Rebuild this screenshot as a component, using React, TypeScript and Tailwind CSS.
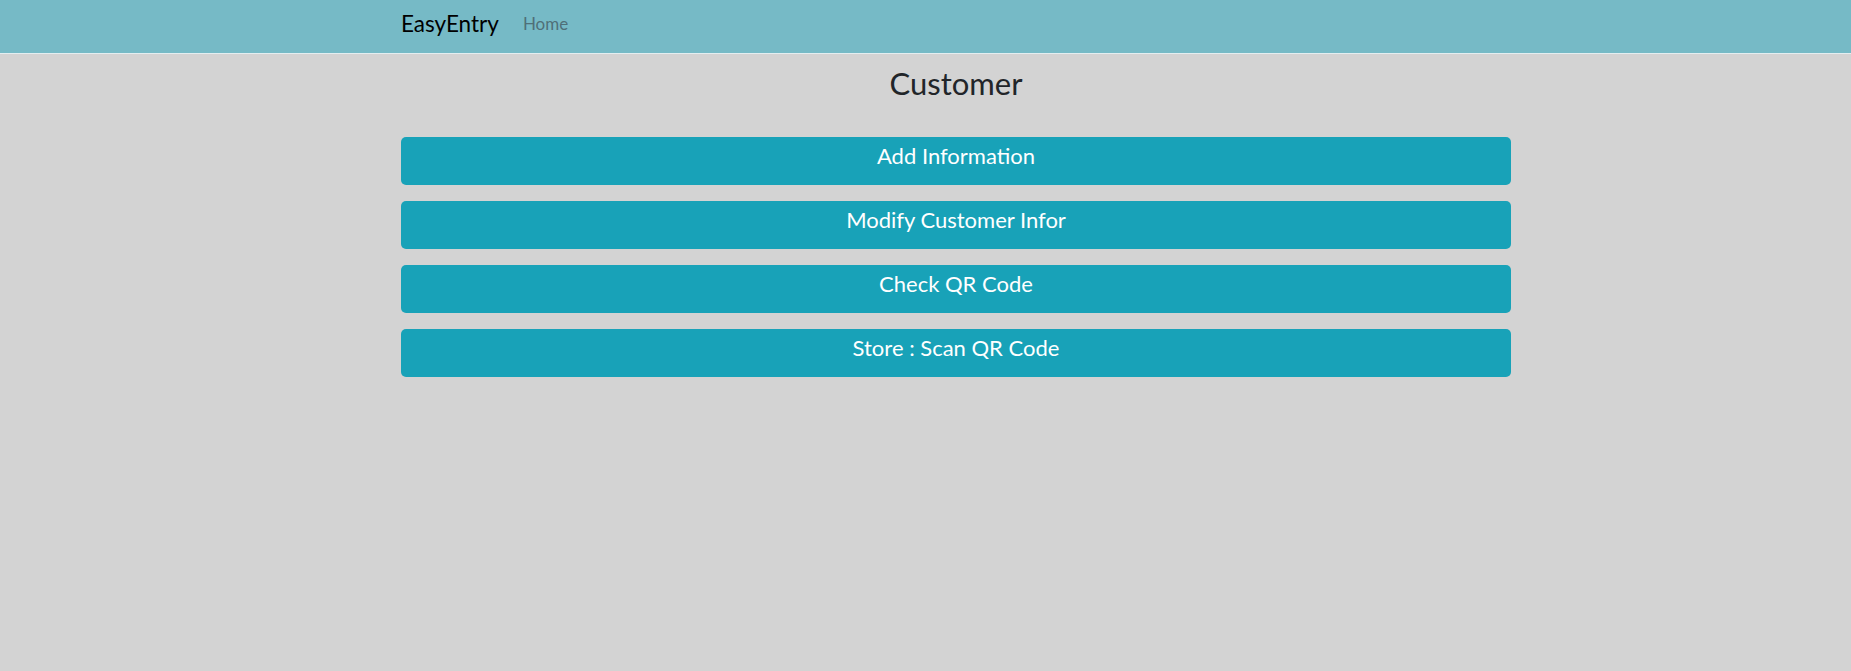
const items = ["Add Information", "Modify Customer Infor", "Check QR Code", "Store : Scan QR Code"];

export default function App() {
  return (
    <div className="min-h-[671px] bg-[#d3d3d3] font-['Lato',sans-serif]">
      <nav className="h-[54px] bg-[#76bac6] border-b border-[#e4eef0]">
        <div className="ml-[401px] w-[1110px] h-full flex items-center pb-[5px]">
          <span className="text-[22.5px] text-black">EasyEntry</span>
          <span className="ml-[24px] text-[17px] text-[#4f6f78]">Home</span>
        </div>
      </nav>
      <main className="ml-[401px] w-[1110px]">
        <h1 className="mt-[11px] text-center text-[31px] text-[#212529] leading-[36px]">Customer</h1>
        <div className="mt-[36px] flex flex-col gap-[16px]">
          {items.map((label) => (
            <button
              key={label}
              type="button"
              className="h-[48px] w-full rounded-[5px] bg-[#18a2b8] text-white text-[22px] leading-[28px] pb-[12px] pt-[2px]"
            >
              {label}
            </button>
          ))}
        </div>
      </main>
    </div>
  );
}
